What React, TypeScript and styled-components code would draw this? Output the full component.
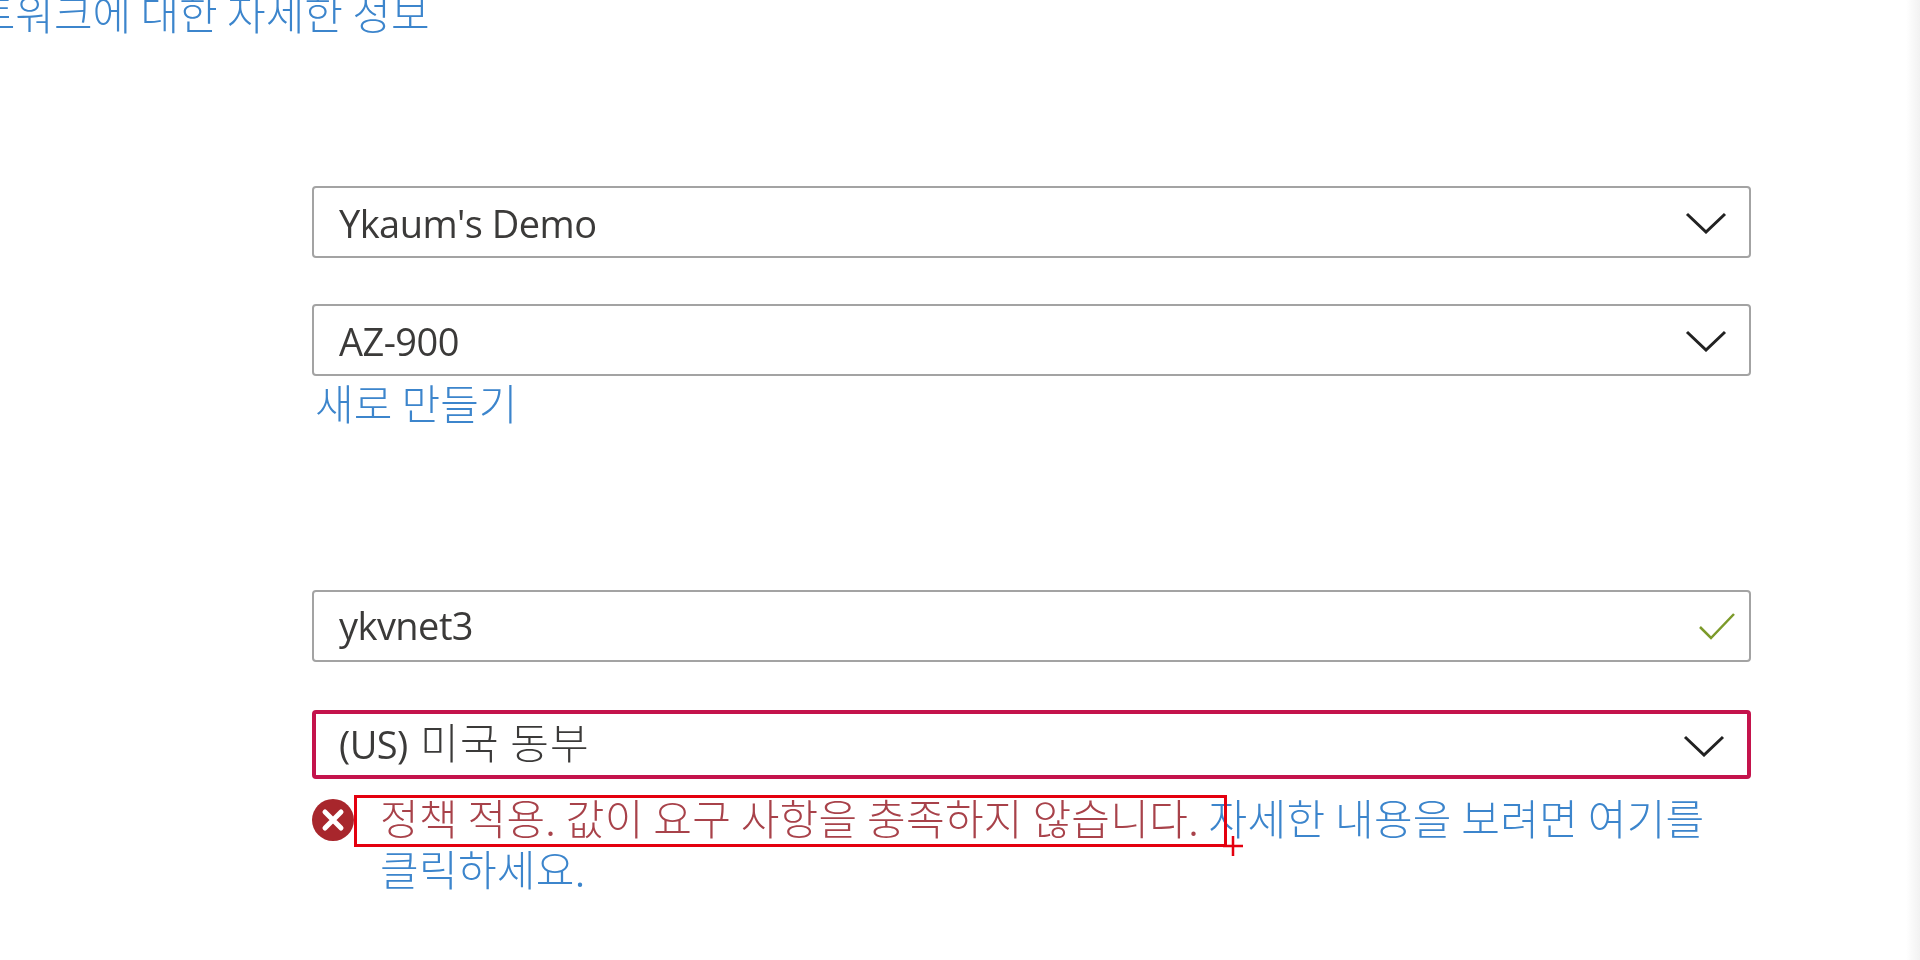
import React from 'react';
import styled, { createGlobalStyle } from 'styled-components';

const Global = createGlobalStyle`
  html, body {
    margin: 0;
    height: 100%;
    overflow: hidden;
    background: #fff;
  }
`;

const FONT = `"Open Sans", "Noto Sans CJK KR", sans-serif`;
const KOREAN = `"Noto Sans CJK KR", sans-serif`;

const Page = styled.div`
  position: relative;
  width: 1920px;
  height: 960px;
  overflow: hidden;
  background: #fff;
  font-family: ${FONT};
  filter: blur(0.5px);
`;

const ScrollShadow = styled.div`
  position: absolute;
  top: 0;
  right: 0;
  bottom: 0;
  width: 14px;
  background: linear-gradient(to right, #ffffff, #f2f2f2);
`;

const Heading = styled.a`
  display: block;
  height: 186px;
  margin-left: -62px;
  margin-top: -16px;
  font-family: ${KOREAN};
  font-size: 42px;
  font-weight: 300;
  line-height: 56px;
  color: #3c85cc;
  white-space: nowrap;
`;

const Form = styled.div`
  width: 1439px;
  margin-left: 312px;
  margin-top: 16px;
  display: flex;
  flex-direction: column;
`;

const Field = styled.div<{ $error?: boolean; $mt?: number }>`
  height: ${p => (p.$error ? 69 : 72)}px;
  margin-top: ${p => p.$mt || 0}px;
  box-sizing: border-box;
  display: flex;
  align-items: center;
  justify-content: space-between;
  padding: 0 22px 0 25px;
  border: ${p => (p.$error ? '4px solid #c4134c' : '2px solid #a3a3a3')};
  border-radius: 4px;
  padding-left: ${p => (p.$error ? 23 : 25)}px;
  font-size: 38px;
  color: #3b3a39;
  letter-spacing: -0.55px;
`;

const Value = styled.span<{ $dy?: number }>`
  line-height: 1;
  margin-top: ${p => p.$dy || 0}px;
`;

const Hangul = styled.span`
  font-family: ${KOREAN};
  font-size: 42px;
  font-weight: 300;
  letter-spacing: 1.2px;
  margin-left: 3px;
`;

const Chevron = styled.svg`
  width: 42px;
  height: 22px;
  flex: none;
  margin-top: 2px;
`;

const Check = styled.svg`
  width: 38px;
  height: 28px;
  flex: none;
  margin-right: -9px;
  margin-top: 0;
`;

const CreateLink = styled.a`
  margin-top: 0;
  margin-left: 3px;
  height: 52px;
  font-family: ${KOREAN};
  font-size: 42px;
  font-weight: 300;
  line-height: 52px;
  color: #3c85cc;
`;

const ErrorRow = styled.div`
  position: relative;
  margin-top: 18px;
  display: flex;
  align-items: flex-start;
  gap: 26px;
`;

const ErrorIcon = styled.svg`
  width: 42px;
  height: 42px;
  flex: none;
  margin-top: 2px;
`;

const Message = styled.div`
  width: 1345px;
  margin-top: -6px;
  font-family: ${KOREAN};
  font-size: 42px;
  font-weight: 300;
  line-height: 51px;
  color: #3c85cc;
  letter-spacing: 0.3px;
  word-break: keep-all;
`;

const Danger = styled.span`
  color: #a8424a;
`;

// red capture rectangle drawn over the message
const Selection = styled.div`
  position: absolute;
  left: 42px;
  top: -2px;
  width: 873px;
  height: 52px;
  border: 3px solid #e4000f;
  box-sizing: border-box;
`;

const Crosshair = styled.svg`
  position: absolute;
  left: 911px;
  top: 39px;
  width: 20px;
  height: 20px;
`;

function Arrow() {
  return (
    <Chevron viewBox="0 0 42 22">
      <path d="M2 2 L21 20 L40 2" fill="none" stroke="#222" strokeWidth="3" />
    </Chevron>
  );
}

export default function App() {
  return (
    <Page>
      <Global />
      <Heading>네트워크에 대한 자세한 정보</Heading>
      <Form>
        <Field>
          <Value $dy={2}>Ykaum's Demo</Value>
          <Arrow />
        </Field>
        <Field $mt={46}>
          <Value $dy={2}>AZ-900</Value>
          <Arrow />
        </Field>
        <CreateLink>새로 만들기</CreateLink>
        <Field $mt={162}>
          <Value $dy={-3}>ykvnet3</Value>
          <Check viewBox="0 0 38 28">
            <path d="M2 15 L13 26 L36 2" fill="none" stroke="#7c9a2a" strokeWidth="2.5" />
          </Check>
        </Field>
        <Field $error $mt={48}>
          <Value $dy={-6}>(US) <Hangul>미국 동부</Hangul></Value>
          <Arrow />
        </Field>
        <ErrorRow>
          <ErrorIcon viewBox="0 0 42 42">
            <circle cx="21" cy="21" r="21" fill="#a8262c" />
            <path d="M13 13 L29 29 M29 13 L13 29" stroke="#fff" strokeWidth="5" strokeLinecap="round" />
          </ErrorIcon>
          <Message>
            <Danger>정책 적용. 값이 요구 사항을 충족하지 않습니다.</Danger> 자세한 내용을 보려면 여기를 클릭하세요.
          </Message>
          <Selection />
          <Crosshair viewBox="0 0 20 20">
            <path d="M10 0 V20 M0 10 H20" stroke="#e4000f" strokeWidth="2.5" />
          </Crosshair>
        </ErrorRow>
      </Form>
      <ScrollShadow />
    </Page>
  );
}
